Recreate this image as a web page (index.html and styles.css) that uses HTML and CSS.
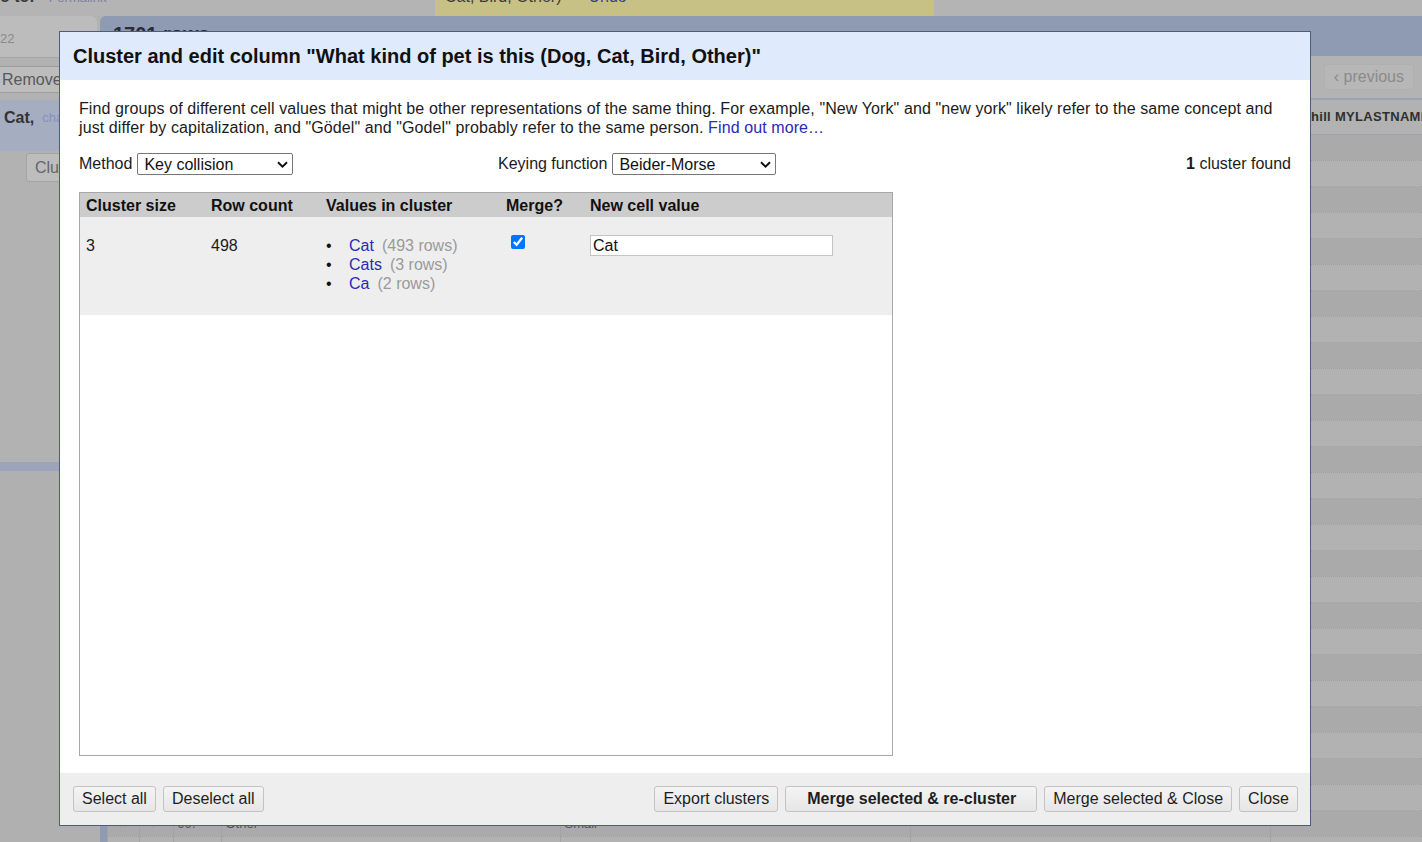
FILE: index.html
```html
<!DOCTYPE html>
<html lang="en">
<head>
<meta charset="utf-8">
<title>Cluster and edit column</title>
<link rel="stylesheet" href="styles.css">
</head>
<body>
<div class="page">
  <div class="topbar">
    <div class="crumbs"><span class="crumb-strong">o to:</span><a class="permalink">Permalink</a></div>
    <div class="notice"><span class="notice-text">Cat, Bird, Other)</span><a class="undo">Undo</a></div>
  </div>
  <div class="main">
    <aside class="leftpanel">
      <div class="lp-tabs">
        <div class="lp-tab"><span class="lp-count">22</span></div>
      </div>
      <div class="lp-tools"><button class="lp-btn">Remove All</button></div>
      <div class="facet"><span class="facet-name">Cat,</span><a class="facet-change">change</a></div>
      <div class="facet-actions"><button class="lp-btn lp-cluster">Cluster</button></div>
      <div class="lp-fill"></div>
      <div class="lp-bar"></div>
      <div class="lp-rest"></div>
    </aside>
    <section class="view">
      <div class="view-head">1701 rows</div>
      <div class="view-tools"><button class="pager">‹ previous</button></div>
      <table class="grid">
        <colgroup>
          <col class="g-bar"><col class="g-star"><col class="g-flag"><col class="g-num"><col class="g-c1"><col class="g-c2"><col class="g-c3"><col class="g-c4">
        </colgroup>
        <thead>
          <tr><th class="bar"></th><th></th><th></th><th></th><th>Timestamp</th><th>What kind of pet is this (Dog, Cat, Bird, Other)</th><th>Size</th><th class="th-last">Churchill MYLASTNAME</th></tr>
        </thead>
        <tbody>
          <tr><td class="bar"></td><td></td><td></td><td></td><td></td><td></td><td></td><td></td></tr>
          <tr><td class="bar"></td><td></td><td></td><td></td><td></td><td></td><td></td><td></td></tr>
          <tr><td class="bar"></td><td></td><td></td><td></td><td></td><td></td><td></td><td></td></tr>
          <tr><td class="bar"></td><td></td><td></td><td></td><td></td><td></td><td></td><td></td></tr>
          <tr><td class="bar"></td><td></td><td></td><td></td><td></td><td></td><td></td><td></td></tr>
          <tr><td class="bar"></td><td></td><td></td><td></td><td></td><td></td><td></td><td></td></tr>
          <tr><td class="bar"></td><td></td><td></td><td></td><td></td><td></td><td></td><td></td></tr>
          <tr><td class="bar"></td><td></td><td></td><td></td><td></td><td></td><td></td><td></td></tr>
          <tr><td class="bar"></td><td></td><td></td><td></td><td></td><td></td><td></td><td></td></tr>
          <tr><td class="bar"></td><td></td><td></td><td></td><td></td><td></td><td></td><td></td></tr>
          <tr><td class="bar"></td><td></td><td></td><td></td><td></td><td></td><td></td><td></td></tr>
          <tr><td class="bar"></td><td></td><td></td><td></td><td></td><td></td><td></td><td></td></tr>
          <tr><td class="bar"></td><td></td><td></td><td></td><td></td><td></td><td></td><td></td></tr>
          <tr><td class="bar"></td><td></td><td></td><td></td><td></td><td></td><td></td><td></td></tr>
          <tr><td class="bar"></td><td></td><td></td><td></td><td></td><td></td><td></td><td></td></tr>
          <tr><td class="bar"></td><td></td><td></td><td></td><td></td><td></td><td></td><td></td></tr>
          <tr><td class="bar"></td><td></td><td></td><td></td><td></td><td></td><td></td><td></td></tr>
          <tr><td class="bar"></td><td></td><td></td><td></td><td></td><td></td><td></td><td></td></tr>
          <tr><td class="bar"></td><td></td><td></td><td></td><td></td><td></td><td></td><td></td></tr>
          <tr><td class="bar"></td><td></td><td></td><td></td><td></td><td></td><td></td><td></td></tr>
          <tr><td class="bar"></td><td></td><td></td><td></td><td></td><td></td><td></td><td></td></tr>
          <tr><td class="bar"></td><td></td><td></td><td></td><td></td><td></td><td></td><td></td></tr>
          <tr><td class="bar"></td><td></td><td></td><td></td><td></td><td></td><td></td><td></td></tr>
          <tr><td class="bar"></td><td></td><td></td><td></td><td></td><td></td><td></td><td></td></tr>
          <tr><td class="bar"></td><td></td><td></td><td></td><td></td><td></td><td></td><td></td></tr>
          <tr><td class="bar"></td><td class="ico">☆</td><td class="ico">⚑</td><td>98.</td><td>Dog</td><td>Large</td><td></td><td></td></tr>
          <tr><td class="bar"></td><td class="ico">☆</td><td class="ico">⚑</td><td>99.</td><td>Other</td><td>Small</td><td></td><td></td></tr>
          <tr><td class="bar"></td><td class="ico">☆</td><td class="ico">⚑</td><td>100.</td><td>Other</td><td>Large</td><td></td><td></td></tr>
        </tbody>
      </table>
    </section>
  </div>
</div>

<div class="dialog" role="dialog" aria-labelledby="dlg-title">
  <div class="dlg-header">
    <h1 class="dlg-title" id="dlg-title">Cluster and edit column "What kind of pet is this (Dog, Cat, Bird, Other)"</h1>
  </div>
  <div class="dlg-body">
    <p class="dlg-desc">Find groups of different cell values that might be other representations of the same thing. For example, "New York" and "new york" likely refer to the same concept and just differ by capitalization, and "Gödel" and "Godel" probably refer to the same person. <a class="link">Find out more…</a></p>
    <div class="dlg-controls">
      <label class="ctl">Method
        <span class="sel-wrap">
          <select class="sel sel-method"><option>Key collision</option><option>Nearest neighbor</option></select>
          <svg class="chev" width="11" height="7" viewBox="0 0 11 7" aria-hidden="true"><path d="M1 1.2 L5.5 5.6 L10 1.2" fill="none" stroke="#111" stroke-width="1.9"/></svg>
        </span>
      </label>
      <label class="ctl">Keying function
        <span class="sel-wrap">
          <select class="sel sel-keying"><option>Beider-Morse</option><option>fingerprint</option></select>
          <svg class="chev" width="11" height="7" viewBox="0 0 11 7" aria-hidden="true"><path d="M1 1.2 L5.5 5.6 L10 1.2" fill="none" stroke="#111" stroke-width="1.9"/></svg>
        </span>
      </label>
      <div class="ctl-count"><b>1</b> cluster found</div>
    </div>
    <div class="cluster-box">
      <table class="clusters">
        <colgroup><col class="c-size"><col class="c-count"><col class="c-values"><col class="c-merge"><col class="c-new"></colgroup>
        <thead>
          <tr><th>Cluster size</th><th>Row count</th><th>Values in cluster</th><th>Merge?</th><th>New cell value</th></tr>
        </thead>
        <tbody>
          <tr>
            <td>3</td>
            <td>498</td>
            <td>
              <ul class="values">
                <li><a class="link">Cat</a><span class="rows">(493 rows)</span></li>
                <li><a class="link">Cats</a><span class="rows">(3 rows)</span></li>
                <li><a class="link">Ca</a><span class="rows">(2 rows)</span></li>
              </ul>
            </td>
            <td><input class="merge-check" type="checkbox" checked aria-label="Merge"></td>
            <td><input class="new-value" type="text" value="Cat" aria-label="New cell value"></td>
          </tr>
        </tbody>
      </table>
    </div>
  </div>
  <div class="dlg-footer">
    <div class="btn-group">
      <button class="btn">Select all</button>
      <button class="btn">Deselect all</button>
    </div>
    <div class="btn-group btn-group-right">
      <button class="btn">Export clusters</button>
      <button class="btn btn-primary">Merge selected &amp; re-cluster</button>
      <button class="btn">Merge selected &amp; Close</button>
      <button class="btn">Close</button>
    </div>
  </div>
</div>
</body>
</html>
```

FILE: styles.css
```css
* { box-sizing: border-box; }

html, body {
  margin: 0;
  padding: 0;
}

body {
  width: 1422px;
  height: 842px;
  overflow: hidden;
  position: relative;
  background: #b1b1b1;
  font-family: "Liberation Sans", Arial, Helvetica, sans-serif;
  font-size: 16px;
  color: #222;
}

/* ---------- dimmed background page ---------- */
.page {
  height: 842px;
  display: flex;
  flex-direction: column;
}

.topbar {
  height: 16px;
  flex: none;
  display: flex;
  background: #b4b4b4;
  overflow: hidden;
}

.crumbs {
  width: 435px;
  flex: none;
  margin-top: -13px;
  white-space: nowrap;
  line-height: 19px;
}

.crumb-strong {
  font-weight: bold;
  color: #3b3b3b;
}

.permalink {
  margin-left: 14px;
  font-size: 13px;
  color: #7880a4;
}

.notice {
  width: 499px;
  flex: none;
  background: #c8c186;
  padding-left: 10px;
  white-space: nowrap;
  line-height: 19px;
}

.notice-text,
.undo {
  display: inline-block;
  margin-top: -13px;
  vertical-align: top;
}

.notice-text { color: #3a3a36; }

.undo {
  margin-left: 27px;
  color: #3d3d9a;
}

.main {
  flex: 1;
  display: flex;
  min-height: 0;
}

.leftpanel {
  width: 100px;
  flex: none;
  display: flex;
  flex-direction: column;
  background: #b2b2b2;
}

.lp-tabs {
  height: 42px;
  flex: none;
  display: flex;
  align-items: flex-start;
  border-bottom: 1px solid #a6a6a6;
}

.lp-tab {
  width: 97px;
  height: 41px;
  background: #bcbcbc;
  border-top-right-radius: 6px;
  display: flex;
  align-items: center;
  padding-top: 3px;
}

.lp-count {
  font-size: 13px;
  color: #8a8a8a;
}

.lp-tools {
  height: 42px;
  flex: none;
  padding-top: 8px;
}

.lp-btn {
  height: 27px;
  padding: 0 2px;
  border: 1px solid #9d9d9d;
  border-left: none;
  border-radius: 0 3px 3px 0;
  background: #bdbdbd;
  font-family: inherit;
  font-size: 16px;
  color: #585858;
  white-space: nowrap;
  width: 100px;
  text-align: left;
}

.facet {
  height: 51px;
  flex: none;
  background: #a5adc1;
  display: flex;
  align-items: flex-start;
  padding: 8px 0 0 4px;
  line-height: 19px;
  white-space: nowrap;
  overflow: hidden;
}

.facet-name {
  font-weight: bold;
  color: #333;
}

.facet-change {
  margin-left: 8px;
  font-size: 13px;
  color: #8690bd;
}

.facet-actions {
  height: 34px;
  flex: none;
  padding: 2px 0 0 26px;
  overflow: hidden;
}

.lp-cluster {
  height: 29px;
  width: 80px;
  border: 1px solid #a4a4a4;
  border-radius: 3px;
  padding-left: 8px;
  color: #666;
}

.lp-fill {
  flex: none;
  height: 277px;
}

.lp-bar {
  flex: none;
  height: 9px;
  background: #9ba4b9;
}

.lp-rest {
  flex: 1;
  background: #b0b0b0;
}

.view {
  flex: 1;
  min-width: 0;
  display: flex;
  flex-direction: column;
}

.view-head {
  height: 40px;
  flex: none;
  background: #8f9ab3;
  border-top-left-radius: 6px;
  padding: 6px 0 0 13px;
  font-size: 20px;
  line-height: 24px;
  font-weight: bold;
  color: #2b2d33;
}

.view-tools {
  height: 42px;
  flex: none;
  display: flex;
  justify-content: flex-end;
  align-items: flex-start;
  padding: 8px 8px 0 0;
  background: #b3b3b3;
}

.pager {
  height: 26px;
  padding: 0 9px;
  border: 1px solid #b0b0b0;
  border-radius: 3px;
  background: #b7b7b7;
  font-family: inherit;
  font-size: 16px;
  color: #8b8b8b;
}

.grid {
  width: 1322px;
  table-layout: fixed;
  border-collapse: collapse;
  background: #b2b2b2;
}

.g-bar { width: 7px; }
.g-star { width: 32px; }
.g-flag { width: 34px; }
.g-num { width: 48px; }
.g-c1 { width: 339px; }
.g-c2 { width: 350px; }
.g-c3 { width: 360px; }
.g-c4 { width: 152px; }

.grid th {
  height: 35px;
  border-top: 2px solid #9aa3b8;
  border-bottom: 1px solid #9aa3b8;
  text-align: left;
  padding: 0 3px;
  font-size: 13px;
  font-weight: bold;
  color: #2f2f2f;
  white-space: nowrap;
  overflow: hidden;
  background: #b2b2b2;
}

.grid th.th-last {
  letter-spacing: 0.3px;
  padding-left: 2px;
}

.grid td {
  height: 26px;
  padding: 0 4px;
  border-bottom: 1px dotted #a0a0a0;
  border-left: 1px solid #a3a3a3;
  font-size: 13px;
  color: #555;
  white-space: nowrap;
  overflow: hidden;
}

.grid tbody tr:nth-child(odd) td { background: #aaaaaa; }
.grid tbody tr:nth-child(even) td { background: #b2b2b2; }

.grid .bar,
.grid tbody tr td.bar {
  background: #8f9ab3;
  border: none;
  padding: 0;
}

.grid td.ico {
  color: #9a9a9a;
  text-align: center;
}

/* ---------- dialog ---------- */
.dialog {
  position: absolute;
  left: 59px;
  top: 31px;
  width: 1252px;
  height: 795px;
  border: 1px solid #4d5e77;
  background: #fff;
  display: flex;
  flex-direction: column;
  color: #1b1b1b;
}

.dlg-header {
  height: 48px;
  flex: none;
  background: #dfeafc;
  display: flex;
  align-items: center;
  padding: 0 13px;
}

.dlg-title {
  margin: 0;
  font-size: 20px;
  line-height: 24px;
  font-weight: bold;
  color: #111;
}

.dlg-body {
  flex: 1;
  min-height: 0;
  display: flex;
  flex-direction: column;
  padding: 19px 18px 17px 19px;
}

.dlg-desc {
  margin: 0;
  line-height: 19px;
  letter-spacing: 0.1px;
}

.link {
  color: #2a2ab4;
  text-decoration: none;
}

.dlg-controls {
  margin-top: 16px;
  height: 22px;
  display: grid;
  grid-template-columns: 419px auto 1fr;
  align-items: center;
}

.ctl {
  display: flex;
  align-items: center;
  gap: 5px;
  white-space: nowrap;
}

.sel-wrap {
  position: relative;
  display: inline-flex;
}

.sel {
  height: 22px;
  border: 1px solid #767676;
  border-radius: 2px;
  background-color: #fff;
  font-family: inherit;
  font-size: 16px;
  color: #111;
  padding: 0 0 0 6px;
  -webkit-appearance: none;
  appearance: none;
}

.chev {
  position: absolute;
  right: 5px;
  top: 8px;
  pointer-events: none;
}

.sel-method { width: 156px; }
.sel-keying { width: 164px; }

.ctl-count {
  text-align: right;
  padding-right: 1px;
}

.cluster-box {
  margin-top: 17px;
  flex: 1;
  min-height: 0;
  width: 814px;
  border: 1px solid #a8a8a8;
  overflow: auto;
  background: #fff;
}

.clusters {
  width: 100%;
  border-collapse: collapse;
  table-layout: fixed;
}

.c-size { width: 125px; }
.c-count { width: 115px; }
.c-values { width: 180px; }
.c-merge { width: 84px; }

.clusters th {
  height: 24px;
  padding: 0 6px;
  background: #cccccc;
  text-align: left;
  font-weight: bold;
  line-height: 19px;
  color: #111;
}

.clusters td {
  height: 98px;
  padding: 19px 6px 0;
  background: #eeeeee;
  vertical-align: top;
  line-height: 19px;
}

.values {
  margin: 0;
  padding: 0;
  list-style: none;
}

.values li::before {
  content: "•";
  display: inline-block;
  width: 23px;
  color: #111;
}

.rows {
  margin-left: 8px;
  color: #9a9a9a;
}

.merge-check {
  display: block;
  width: 14px;
  height: 14px;
  margin: -1px 0 0 5px;
}

.new-value {
  display: block;
  width: 243px;
  height: 21px;
  margin: -1px 0 0;
  padding: 0 2px;
  border: 1px solid #c4c4c4;
  font-family: inherit;
  font-size: 16px;
  color: #111;
  background: #fff;
}

.dlg-footer {
  height: 52px;
  flex: none;
  background: #eeeeee;
  display: flex;
  align-items: flex-start;
  padding: 13px 12px 0 13px;
}

.btn-group {
  display: flex;
  gap: 7px;
}

.btn-group-right {
  margin-left: auto;
}

.btn {
  height: 26px;
  padding: 0 8px;
  border: 1px solid #c3c3c3;
  border-radius: 3px;
  background: linear-gradient(#f4f4f4, #e6e6e6);
  font-family: inherit;
  font-size: 16px;
  color: #1e1e1e;
  white-space: nowrap;
}

.btn-primary {
  padding: 0 20px 0 21px;
  font-weight: bold;
}
```
